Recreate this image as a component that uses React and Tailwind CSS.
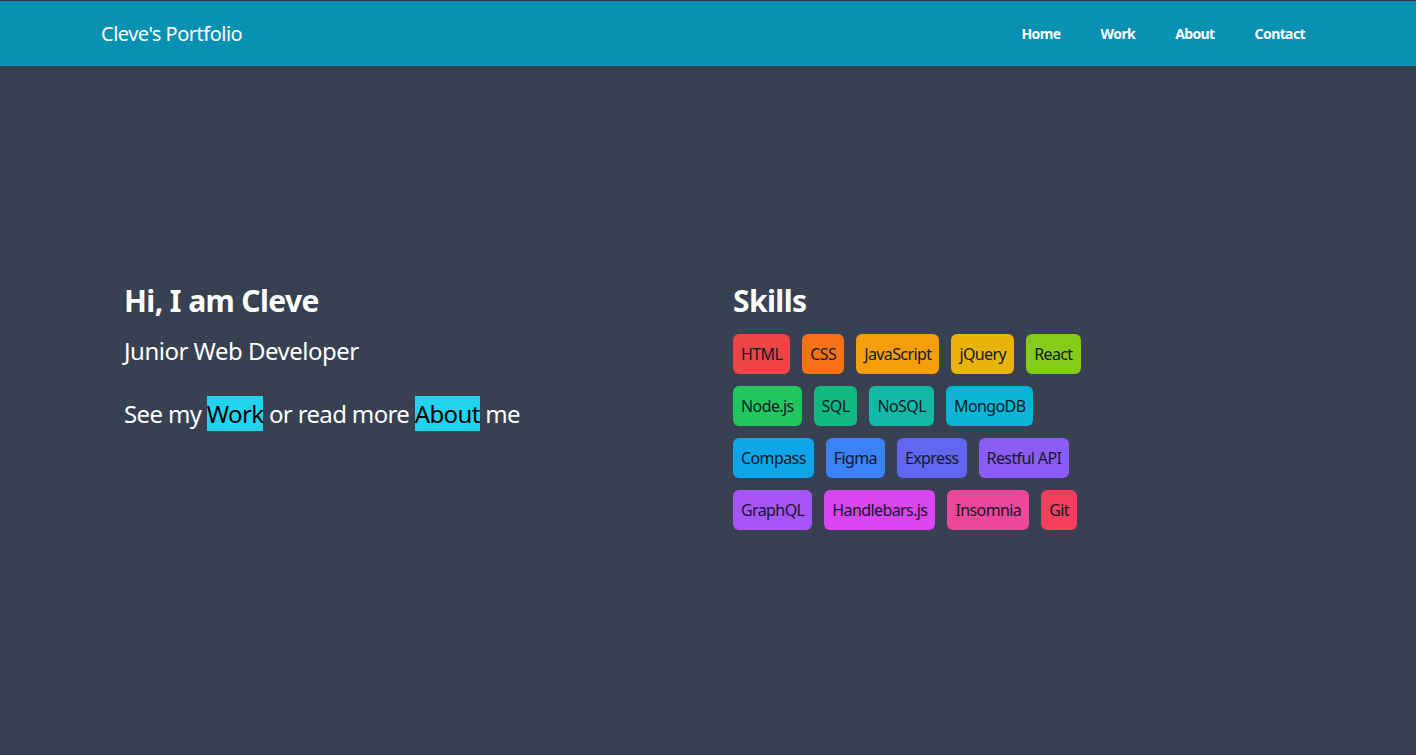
const skills = [
  ["HTML", "bg-[#ef4444]"],
  ["CSS", "bg-[#f97316]"],
  ["JavaScript", "bg-[#f59e0b]"],
  ["jQuery", "bg-[#eab308]"],
  ["React", "bg-[#84cc16]"],
  ["Node.js", "bg-[#22c55e]"],
  ["SQL", "bg-[#10b981]"],
  ["NoSQL", "bg-[#14b8a6]"],
  ["MongoDB", "bg-[#06b6d4]"],
  ["Compass", "bg-[#0ea5e9]"],
  ["Figma", "bg-[#3b82f6]"],
  ["Express", "bg-[#6366f1]"],
  ["Restful API", "bg-[#8b5cf6]"],
  ["GraphQL", "bg-[#a855f7]"],
  ["Handlebars.js", "bg-[#d946ef]"],
  ["Insomnia", "bg-[#ec4899]"],
  ["Git", "bg-[#f43f5e]"],
];

const rows = [skills.slice(0, 5), skills.slice(5, 9), skills.slice(9, 13), skills.slice(13)];

export default function App() {
  return (
    <div className="min-h-screen bg-[#374151] text-white" style={{ fontFamily: "'Noto Sans', sans-serif" }}>
      <header className="h-[66px] bg-[#0891b2] border-t border-[#2f3a47] flex items-center justify-between pl-[101px] pr-[91px]">
        <a href="#" className="text-xl tracking-[-0.5px]">Cleve's Portfolio</a>
        <nav className="flex">
          {["Home", "Work", "About", "Contact"].map(item => (
            <a key={item} href="#" className="px-5 text-sm font-bold tracking-[-0.6px]">{item}</a>
          ))}
        </nav>
      </header>

      <main className="h-[689px] flex items-center pl-[124px] pb-2">
        <div className="flex items-start">
          <section className="w-[609px]">
            <h1 className="text-3xl font-bold tracking-[-0.6px]">Hi, I am Cleve</h1>
            <h2 className="text-2xl mt-4 tracking-[-0.5px]">Junior Web Developer</h2>
            <p className="text-2xl mt-[31px] tracking-[-0.65px]">
              See my <a href="#" className="bg-[#22d3ee] text-black py-px">Work</a> or read more{" "}
              <a href="#" className="bg-[#22d3ee] text-black py-px">About</a> me
            </p>
          </section>

          <section>
            <h2 className="text-3xl font-bold mb-[15px] tracking-[-0.6px]">Skills</h2>
            <div className="flex flex-col gap-3">
              {rows.map((row, i) => (
                <div key={i} className="flex gap-3">
                  {row.map(([name, color]) => (
                    <span key={name} className={`${color} text-[#111827] rounded-md px-2 h-10 flex items-center tracking-[-0.6px]`}>
                      {name}
                    </span>
                  ))}
                </div>
              ))}
            </div>
          </section>
        </div>
      </main>
    </div>
  );
}
